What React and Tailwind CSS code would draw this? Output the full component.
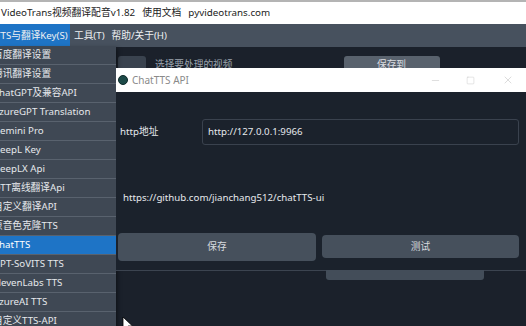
import { Minus, Square, X } from 'lucide-react';

const menuItems = [
  '百度翻译设置',
  '腾讯翻译设置',
  'ChatGPT及兼容API',
  'AzureGPT Translation',
  'Gemini Pro',
  'DeepL Key',
  'DeepLX Api',
  'OTT离线翻译Api',
  '自定义翻译API',
  '原音色克隆TTS',
  'ChatTTS',
  'GPT-SoVITS TTS',
  'ElevenLabs TTS',
  'AzureAI TTS',
  '自定义TTS-API',
];

const font = { fontFamily: '"Noto Sans", "Noto Sans CJK SC", sans-serif' };

export default function App() {
  return (
    <div
      className="relative w-[526px] h-[326px] overflow-hidden bg-[#1b212b] text-[9.7px] leading-none"
      style={font}
    >
      {/* main window title bar */}
      <div className="h-[24px] bg-white border-t-2 border-[#b4b4b4] flex items-center text-[#222] text-[9.8px] whitespace-nowrap">
        <span className="ml-[1px]">VideoTrans视频翻译配音v1.82</span>
        <span className="ml-[7px]">使用文档</span>
        <span className="ml-[7px]">pyvideotrans.com</span>
      </div>

      {/* menu bar */}
      <div className="h-[23px] bg-[#47515e] flex items-stretch text-[#eef0f2] whitespace-nowrap">
        <div className="w-[70px] bg-[#1e74c6] flex items-center overflow-hidden">
          <span className="ml-[-5px]">TTS与翻译Key(S)</span>
        </div>
        <div className="flex items-center ml-[4px]">工具(T)</div>
        <div className="flex items-center ml-[7px]">帮助/关于(H)</div>
      </div>

      {/* main window content behind dialog */}
      <div className="flex items-start pt-[9px] pl-[118px]">
        <div className="w-[28px] h-[14px] rounded-t-[3px] bg-[#3a434f]" />
        <div className="ml-[9px] text-[#9aa3ad] pt-[4px]">选择要处理的视频</div>
        <div className="ml-[111px] w-[96px] h-[14px] rounded-t-[3px] bg-[#59626d] flex justify-center pt-[4px] text-[#d9dde1]">
          保存到
        </div>
      </div>

      {/* dropdown menu */}
      <div className="absolute left-0 top-[46px] w-[116px] bg-[#3f4854] shadow-[2px_2px_4px_rgba(0,0,0,0.4)]">
        {menuItems.map((item) => (
          <div
            key={item}
            className={`h-[19px] flex items-center whitespace-nowrap overflow-hidden border-b border-[#59626e] ${
              item === 'ChatTTS' ? 'bg-[#1e74c6] text-white' : 'text-[#e6e9ec]'
            }`}
          >
            <span className="ml-[-7px]">{item}</span>
          </div>
        ))}
      </div>

      {/* ChatTTS API dialog */}
      <div className="absolute left-[116px] top-[68px] w-[410px] h-[203px] bg-[#1b222c] border-b border-[#3c4450] flex flex-col">
        <div className="h-[24px] bg-white flex items-center">
          <div className="ml-[2px] w-[10px] h-[10px] rounded-full bg-[#1d4a48] border border-[#0e2a2a]" />
          <span className="ml-[4px] text-[#8a8a8a] text-[10px]">ChatTTS API</span>
          <div className="ml-auto flex items-center text-[#c4c4c4]">
            <Minus size={11} strokeWidth={1.2} className="mr-[25px]" />
            <Square size={9} strokeWidth={1.2} className="mr-[27px]" />
            <X size={12} strokeWidth={1.2} className="mr-[12px]" />
          </div>
        </div>

        <div className="flex items-center mt-[27px] pl-[4px] pr-[7px]">
          <span className="w-[82px] text-[#e6e9ec]">http地址</span>
          <div className="flex-1 h-[26px] rounded-[3px] border border-[#3a424e] flex items-center pl-[5px] text-[#e6e9ec]">
            http://127.0.0.1:9966
          </div>
        </div>

        <div className="mt-[48px] pl-[7px] text-[#e6e9ec]">
          https://github.com/jianchang512/chatTTS-ui
        </div>

        <div className="flex items-center gap-[6px] mt-[30px] pl-[2px] pr-[7px]">
          <button className="w-[198px] h-[28px] rounded-[4px] bg-[#46505c] text-[#d6dadf]">保存</button>
          <button className="flex-1 h-[23px] rounded-[4px] bg-[#46505c] text-[#d6dadf]">测试</button>
        </div>
      </div>

      {/* main window button peeking under dialog */}
      <div className="absolute left-[326px] top-[270px] w-[158px] h-[10px] rounded-b-[3px] bg-[#434d59]" />

      {/* mouse cursor */}
      <svg className="absolute left-[122px] top-[316px]" width="12" height="16" viewBox="0 0 12 16">
        <path d="M1 1 L1 14 L4 11 L6.5 15.5 L8.5 14.5 L6 10 L10.5 10 Z" fill="#fff" stroke="#000" strokeWidth="0.8" />
      </svg>
    </div>
  );
}
